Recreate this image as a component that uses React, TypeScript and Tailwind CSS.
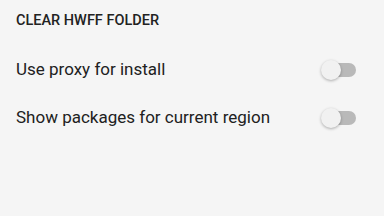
export default function App() {
  const rows = ["Use proxy for install", "Show packages for current region"];

  return (
    <div
      className="w-[384px] h-[216px] bg-[#f5f5f5] overflow-hidden"
      style={{ fontFamily: "Roboto, sans-serif" }}
    >
      {/* header */}
      <div className="h-[46px] pt-[12px] pl-[16px] text-[14.5px] leading-[18px] font-medium text-[#222]">
        CLEAR HWFF FOLDER
      </div>

      {/* toggle rows */}
      {rows.map((label) => (
        <div key={label} className="h-[48px] flex items-center justify-between pl-[16px] pr-[28px]">
          <span className="text-[17px] text-[#212121]">{label}</span>
          <div className="relative w-[30px] h-[14px] rounded-full bg-[#b9b9b9]">
            <div className="absolute left-[-5px] top-[-3px] w-[20px] h-[20px] rounded-full bg-[#f1f1f1] shadow-[0_1px_3px_rgba(0,0,0,0.3)]" />
          </div>
        </div>
      ))}
    </div>
  );
}
